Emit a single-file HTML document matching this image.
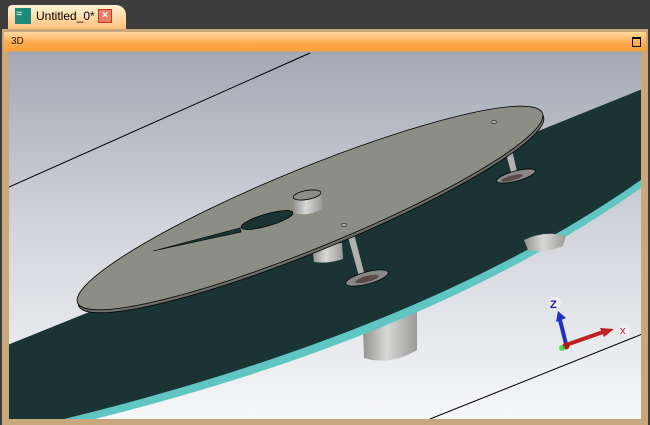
<!DOCTYPE html>
<html><head><style>
body{margin:0;width:650px;height:425px;overflow:hidden;background:#3d3d3d;font-family:"Liberation Sans",sans-serif;position:relative}
.tab{position:absolute;left:8px;top:5px;width:118px;height:24px;background:linear-gradient(#fff3d6,#ffc27a);border-radius:4px 10px 0 0;}
.panel{position:absolute;left:2px;top:29px;width:646px;height:396px;background:#c9a77c}
.hdr{position:absolute;left:4px;top:32px;width:642px;height:19px;background:linear-gradient(#ffd9a0,#ffa94a 60%,#ff9f3c)}
.vp{position:absolute;left:9px;top:52px;width:632px;height:367px;background:linear-gradient(#a3a8b5,#d4d6dc 50%,#f6f7f9);overflow:hidden}
</style></head><body>
<div class="panel"></div>
<div class="tab"></div>
<div style="position:absolute;left:15px;top:8px;width:16px;height:16px;background:#1e8a7a"></div>
<div style="position:absolute;left:16px;top:8px;color:#fff;font-size:11px">≈</div>
<div style="position:absolute;left:36px;top:9px;font-size:12px;color:#000">Untitled_0*</div>
<div style="position:absolute;left:98px;top:9px;width:12px;height:12px;background:#e8806a;border:1px solid #c03a20;color:#fff;font-size:10px;line-height:12px;text-align:center;font-weight:bold">×</div>
<div class="hdr"></div>
<div style="position:absolute;left:11px;top:36px;font-size:10px;color:#222">3D</div>
<div style="position:absolute;left:632px;top:37px;width:7px;height:7px;border:1px solid #000;border-top-width:2px"></div>
<div class="vp">
<svg width="632" height="367" viewBox="9 52 632 367" xmlns="http://www.w3.org/2000/svg">
<defs><linearGradient id="cy" x1="0" x2="1"><stop offset="0" stop-color="#8f908e"/><stop offset=".45" stop-color="#d8d8d6"/><stop offset="1" stop-color="#9a9b98"/></linearGradient></defs>
<line x1="9" y1="187" x2="310" y2="53" stroke="#000" stroke-width="1"/>
<line x1="430" y1="419" x2="645" y2="333" stroke="#000" stroke-width="1"/>
<path d="M362,300 L417,300 L417,350 Q390,366 364,358Z" fill="url(#cy)"/>
<path d="M0,352 L645,92 L645,185 Q430,339 70,425 L0,425Z" fill="#5fc6c4"/>
<path d="M0,348 L645,88 L645,177 Q430,330 60,420 L0,420Z" fill="#1a3333"/>
<path d="M524,240 Q545,230 566,236 L563,246 Q545,254 528,250Z" fill="url(#cy)"/>
<path d="M312,246 L342,243 L343,259 Q328,264 314,262Z" fill="url(#cy)"/>
<path d="M345,226 L352,226 L366,280 L360,280Z" fill="#b0b1ae"/>
<ellipse cx="367" cy="278" rx="22" ry="6" transform="rotate(-15 367 278)" fill="#888" stroke="#000" stroke-width=".8"/>
<ellipse cx="367" cy="279" rx="12" ry="3" transform="rotate(-15 367 279)" fill="#5a4a4a"/>
<path d="M505,150 L512,150 L518,176 L512,176Z" fill="#b0b1ae"/>
<ellipse cx="516" cy="176" rx="20" ry="5" transform="rotate(-15 516 176)" fill="#888" stroke="#000" stroke-width=".8"/>
<ellipse cx="512" cy="178" rx="11" ry="2.5" transform="rotate(-15 512 178)" fill="#5a4a4a"/>
<ellipse cx="311" cy="211" rx="251" ry="40" transform="rotate(-22.2 311 211)" fill="#6e6f69" stroke="#000" stroke-width=".8"/>
<ellipse cx="310" cy="208" rx="251" ry="40" transform="rotate(-22.2 310 208)" fill="#8c8d85" stroke="#000" stroke-width=".8"/>
<ellipse cx="267" cy="220" rx="27" ry="6" transform="rotate(-16 267 220)" fill="#1a3333" stroke="#000" stroke-width=".8"/>
<path d="M153,251 L240,228 L241,232 Z" fill="#1a3333" stroke="#000" stroke-width=".6"/>
<path d="M293,197 L293,213 Q308,217 322,209 L321,193Z" fill="url(#cy)"/>
<ellipse cx="307" cy="195" rx="14" ry="4.5" transform="rotate(-10 307 195)" fill="#8c8d85" stroke="#000" stroke-width=".8"/>
<ellipse cx="344" cy="225" rx="3" ry="1.5" fill="#aaa" stroke="#000" stroke-width=".5"/>
<ellipse cx="494" cy="122" rx="3" ry="1.5" fill="#aaa" stroke="#000" stroke-width=".5"/>
<circle cx="555" cy="303" r="6" fill="#eceef4"/>
<text x="550" y="308" font-size="11" font-family="Liberation Sans" fill="#1a1aa0" font-weight="bold">Z</text>
<path d="M566,344 L560,320" stroke="#2030c0" stroke-width="4"/>
<path d="M556,322 L558,311 L566,318Z" fill="#2030c0"/>
<path d="M566,345 L603,332" stroke="#c02020" stroke-width="4"/>
<path d="M600,328 L614,329 L604,337Z" fill="#c02020"/>
<circle cx="566" cy="346" r="3.5" fill="#b01818"/>
<circle cx="562" cy="348" r="3" fill="#30d030" opacity=".8"/>
<circle cx="625" cy="330" r="6" fill="#eceef4"/>
<text x="620" y="334" font-size="11" font-family="Liberation Sans" fill="#d02020">x</text>
</svg>
</div>
</body></html>
